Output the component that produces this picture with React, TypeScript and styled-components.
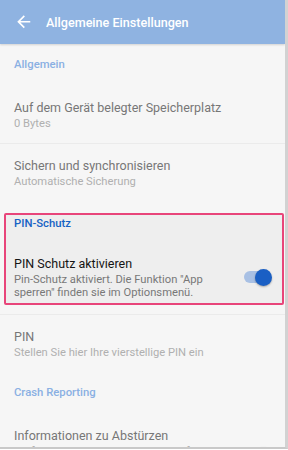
import styled, { createGlobalStyle } from "styled-components"

const Global = createGlobalStyle`
  html, body { margin: 0; padding: 0; background: #ffffff; }
  body { font-family: Roboto, "Noto Sans", Arial, sans-serif; }
`

const App = () => (
  <>
    <Global />
    <Screen>
      <Header>
        <BackArrow viewBox="0 0 24 24">
          <path d="M20 11H7.83l5.59-5.59L12 4l-8 8 8 8 1.41-1.41L7.83 13H20v-2z" fill="#ffffff" />
        </BackArrow>
        <Title>Allgemeine Einstellungen</Title>
      </Header>

      <Category>Allgemein</Category>
      <Item>
        <ItemTitle>Auf dem Gerät belegter Speicherplatz</ItemTitle>
        <ItemSummary>0 Bytes</ItemSummary>
      </Item>
      <Divider />
      <Item>
        <ItemTitle>Sichern und synchronisieren</ItemTitle>
        <ItemSummary>Automatische Sicherung</ItemSummary>
      </Item>

      <Highlight>
        <Category $active>PIN-Schutz</Category>
        <SwitchItem $active>
          <ItemText>
            <ItemTitle $active>PIN Schutz aktivieren</ItemTitle>
            <ItemSummary $active>
              Pin-Schutz aktiviert. Die Funktion "App sperren" finden sie im Optionsmenü.
            </ItemSummary>
          </ItemText>
          <Switch $active />
        </SwitchItem>
      </Highlight>

      <Divider />
      <Item>
        <ItemTitle>PIN</ItemTitle>
        <ItemSummary>Stellen Sie hier Ihre vierstellige PIN ein</ItemSummary>
      </Item>

      <Category>Crash Reporting</Category>
      <SwitchItem>
        <ItemText>
          <ItemTitle>Informationen zu Abstürzen</ItemTitle>
          <ItemSummary>
            Helfen Sie beim Verbessern der Software, indem Sie anonyme Absturzberichte senden.
          </ItemSummary>
        </ItemText>
        <Switch />
      </SwitchItem>
    </Screen>
  </>
)

export default App

const Screen = styled.div`
  width: 288px;
  height: 449px;
  background: #f6f6f6;
  border-right: 3px solid #d2d2d2;
  border-bottom: 2px solid #c9c9c9;
  box-sizing: border-box;
  overflow: hidden;
  display: flex;
  flex-direction: column;
`
const Header = styled.div`
  height: 44px;
  flex-shrink: 0;
  background: #8fb3e1;
  display: flex;
  align-items: center;
  padding-left: 14px;
  box-shadow: 0 1px 2px rgba(0, 0, 0, 0.15);
`
const BackArrow = styled.svg`
  width: 19.5px;
  height: 19.5px;
  margin-right: 12.5px;
`
const Title = styled.div`
  color: #ffffff;
  font-size: 12.6px;
  font-weight: 500;
`
const Category = styled.div<{ $active?: boolean }>`
  flex-shrink: 0;
  padding: ${(p) => (p.$active ? "2px 0 25px 8px" : "14px 0 14px 14px")};
  font-size: 11.3px;
  line-height: 14px;
  font-weight: 500;
  color: ${(p) => (p.$active ? "#1662c4" : "#8ab0e3")};
`
const Item = styled.div`
  flex-shrink: 0;
  padding: 14px 14px 13px;
  display: flex;
  flex-direction: column;
`
const Divider = styled.div`
  height: 1px;
  background: #ebebeb;
  flex-shrink: 0;
`
const ItemTitle = styled.div<{ $active?: boolean }>`
  font-size: 12.5px;
  line-height: 16px;
  margin-bottom: 1px;
  color: ${(p) => (p.$active ? "#151515" : "#777777")};
`
const ItemSummary = styled.div<{ $active?: boolean }>`
  font-size: 11.2px;
  line-height: 13px;
  color: ${(p) => (p.$active ? "#787878" : "#b0b0b0")};
`
const Highlight = styled.div`
  flex-shrink: 0;
  margin: 11.5px 1px 8.5px 4px;
  border: 2px solid #e8457a;
  border-radius: 2px;
  background: #eeeeee;
  display: flex;
  flex-direction: column;
  padding-bottom: 4.5px;
`
const SwitchItem = styled.div<{ $active?: boolean }>`
  flex-shrink: 0;
  display: flex;
  align-items: center;
  padding: ${(p) => (p.$active ? "0 10px 0 8px" : "14px 13px 0 14px")};
  gap: 22px;
`
const ItemText = styled.div`
  flex: 1;
  display: flex;
  flex-direction: column;
`
const Switch = styled.div<{ $active?: boolean }>`
  position: relative;
  width: 25px;
  height: 11.5px;
  border-radius: 6px;
  background: ${(p) => (p.$active ? "#a8c0e4" : "#c3d4ec")};
  flex-shrink: 0;
  margin-right: 3px;

  &::after {
    content: "";
    position: absolute;
    right: -3px;
    top: 50%;
    margin-top: -8.5px;
    width: 17px;
    height: 17px;
    border-radius: 50%;
    background: ${(p) => (p.$active ? "#1a5fc4" : "#8fb3e1")};
    box-shadow: 0 1px 2px rgba(0, 0, 0, 0.3);
  }
`
